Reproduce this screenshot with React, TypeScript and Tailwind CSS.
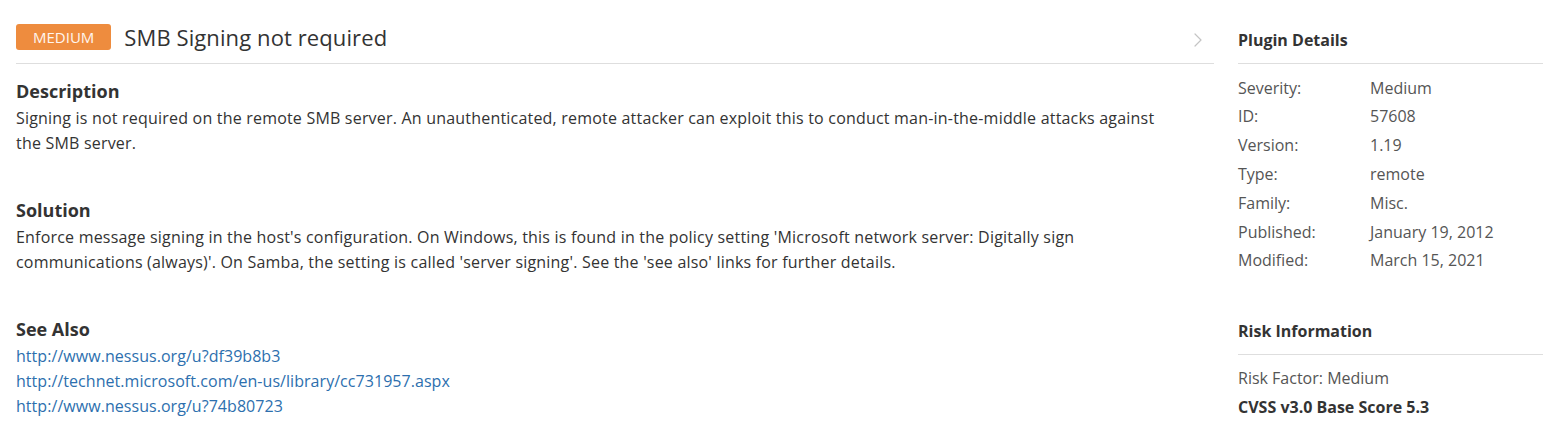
import { ChevronRight } from "lucide-react";

const pluginDetails = [
  ["Severity:", "Medium"],
  ["ID:", "57608"],
  ["Version:", "1.19"],
  ["Type:", "remote"],
  ["Family:", "Misc."],
  ["Published:", "January 19, 2012"],
  ["Modified:", "March 15, 2021"],
];

const links = [
  "http://www.nessus.org/u?df39b8b3",
  "http://technet.microsoft.com/en-us/library/cc731957.aspx",
  "http://www.nessus.org/u?74b80723",
];

function Section({ title, children, first }: { title: string; children: React.ReactNode; first?: boolean }) {
  return (
    <div className={first ? "mt-[12px]" : "mt-[39px]"}>
      <h3 className="text-[18px] font-bold leading-[30px] text-[#333]">{title}</h3>
      <div className="text-base leading-[25px] tracking-[0.2px] text-[#333] max-w-[1140px]">{children}</div>
    </div>
  );
}

export default function App() {
  return (
    <div
      className="flex bg-white pl-4 min-h-[423px] overflow-hidden"
      style={{ fontFamily: '"Open Sans", "Noto Sans", sans-serif' }}
    >
      <div className="w-[1198px] shrink-0">
        <div className="flex items-center justify-between h-[64px] pt-[24px] pb-[13px] pr-[4px] border-b border-[#dedede]">
          <div className="flex items-center">
            <span className="h-[26px] px-[17px] flex items-center rounded-[3px] bg-[#ee8c3e] text-[#fff5ee] text-[15px] uppercase">
              Medium
            </span>
            <h1 className="ml-[13px] text-[22px] leading-[26px] tracking-[0.1px] text-[#333]">SMB Signing not required</h1>
          </div>
          <ChevronRight className="w-[24px] h-[24px] relative top-[3px] text-[#c4c4c4]" strokeWidth={1.2} />
        </div>

        <Section title="Description" first>
          Signing is not required on the remote SMB server. An unauthenticated, remote attacker can exploit this to
          conduct man-in-the-middle attacks against the SMB server.
        </Section>

        <Section title="Solution">
          Enforce message signing in the host's configuration. On Windows, this is found in the policy setting
          'Microsoft network server: Digitally sign communications (always)'. On Samba, the setting is called 'server
          signing'. See the 'see also' links for further details.
        </Section>

        <Section title="See Also">
          {links.map((l) => (
            <a key={l} href="#" className="block tracking-[0.05px] text-[#2d6fae] hover:underline">
              {l}
            </a>
          ))}
        </Section>
      </div>

      <div className="ml-[24px] flex-1 pt-[28px]">
        <h3 className="text-base font-bold leading-[24px] pb-[11px] border-b border-[#dedede] text-[#333]">
          Plugin Details
        </h3>
        <div className="pt-[9.6px]">
          {pluginDetails.map(([k, v]) => (
            <div key={k} className="flex text-base leading-[28.8px] text-[#555]">
              <span className="w-[132px] shrink-0">{k}</span>
              <span>{v}</span>
            </div>
          ))}
        </div>

        <h3 className="mt-[43.6px] text-base font-bold leading-[24px] pb-[11px] border-b border-[#dedede] text-[#333]">
          Risk Information
        </h3>
        <div className="pt-[9.6px] text-base leading-[28.8px]">
          <div className="text-[#555]">Risk Factor: Medium</div>
          <div className="font-bold text-[#333]">CVSS v3.0 Base Score 5.3</div>
        </div>
      </div>
    </div>
  );
}
